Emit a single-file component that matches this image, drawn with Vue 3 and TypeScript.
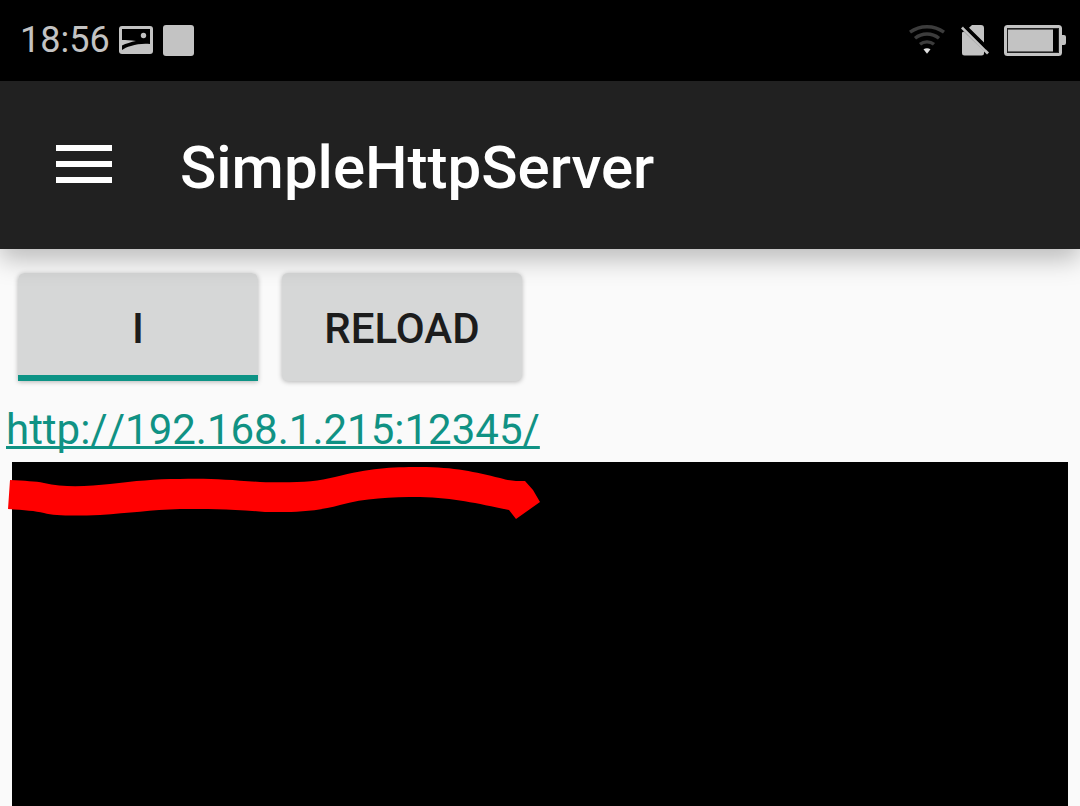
<script setup lang="ts">
import { ref } from 'vue'

const running = ref<boolean>(true)
const address = ref<string>('http://192.168.1.215:12345/')

function toggle(): void {
  running.value = !running.value
}
</script>

<template>
  <div class="screen">
    <div class="status">
      <div class="group">
        <span class="time">18:56</span>
        <svg class="picture" width="34" height="29" viewBox="0 0 34 29" aria-hidden="true">
          <rect width="34" height="28" rx="3" fill="#c3c3c3" />
          <path d="M3 3H31V18C25 17.300 18 18 12 20C8 21 5 22.500 3 24V19.500C7 17.500 12 16 17 15C12 14.300 7 14 3 14Z" fill="#000" />
          <circle cx="24.500" cy="9.500" r="2.700" fill="#c3c3c3" />
        </svg>
        <span class="square"></span>
      </div>
      <div class="group">
        <svg class="wifi" width="36" height="31" viewBox="0 0 36 31" aria-hidden="true">
          <g fill="none" stroke="#3c3c3c" stroke-width="3.400">
            <path d="M1 7.200C11 -.100 25 -.100 35 7.200" />
            <path d="M6 13.200C13 7.500 23 7.500 30 13.200" />
            <path d="M11 19.300C15 16 21 16 25 19.300" />
          </g>
          <path d="M14.500 24.300Q18 22.300 21.500 24.300L18 28.800Z" fill="#e0e0e0" />
        </svg>
        <svg class="sim" width="28" height="31" viewBox="0 0 28 31" aria-hidden="true">
          <path d="M11 0H20Q23 0 23 3V17.500L8 2.800Z" fill="#c3c3c3" />
          <path d="M1 7.500L3 6.500L23 26V28Q23 30.500 20.500 30.500H3.500Q1 30.500 1 28Z" fill="#c3c3c3" />
          <path d="M1 2.500L27 28.500" fill="none" stroke="#c3c3c3" stroke-width="2.800" />
          <path d="M3.500 1L26 23.500" fill="none" stroke="#000" stroke-width="3" />
        </svg>
        <svg class="battery" width="62" height="31" viewBox="0 0 62 31" aria-hidden="true">
          <rect x="1.500" y="1.500" width="55" height="28" rx="2" fill="none" stroke="#c3c3c3" stroke-width="3" />
          <rect x="4" y="4.500" width="45" height="22" fill="#c3c3c3" />
          <path d="M3.500 3.500H54.500V27.500H3.500Z" fill="none" stroke="#222" stroke-width="1" />
          <path d="M58 10H60Q62 10 62 12V18Q62 20 60 20H58Z" fill="#c3c3c3" />
        </svg>
      </div>
    </div>

    <header class="toolbar">
      <button class="menu" type="button" aria-label="Menu">
        <span></span><span></span><span></span>
      </button>
      <h1>SimpleHttpServer</h1>
    </header>

    <main class="content">
      <div class="actions">
        <button class="btn" :class="{ on: running }" type="button" :aria-pressed="running" @click="toggle">
          {{ running ? 'I' : 'O' }}
        </button>
        <button class="btn" type="button">RELOAD</button>
      </div>
      <a class="address" :href="address">{{ address }}</a>
      <section class="log" aria-label="Log">
        <svg class="marker" width="534" height="54" viewBox="8 466 534 54" aria-hidden="true">
          <path
            d="M10 480C25 481 35 481 44 483C65 488 90 486 110 484C135 481 155 479 180 479C210 478 230 480 260 482C295 483 315 482 335 477C370 468 390 467 420 467C455 467 475 472 500 478C510 481 515 481 525 481L533 490L540 502L516 519L509 510C475 503 455 498 420 497C390 497 365 498 340 505C310 513 290 512 265 512C230 509 210 509 180 509C150 510 130 513 100 515C75 516 55 516 44 513C35 511 25 510 8 509Z"
            fill="#f00"
          />
        </svg>
      </section>
    </main>
  </div>
</template>

<style>
body {
  margin: 0;
}
</style>

<style scoped>
.screen {
  display: flex;
  flex-direction: column;
  min-height: 100vh;
  background: #fafafa;
  color: #1c1c1c;
  font-family: Roboto, "Liberation Sans", sans-serif;
}

.status {
  display: flex;
  align-items: center;
  justify-content: space-between;
  box-sizing: border-box;
  height: 81px;
  padding: 0 14px 0 20px;
  background: #000;
}

.group {
  display: flex;
  align-items: center;
}

.time {
  margin-right: 9px;
  padding-bottom: 2px;
  color: #c3c3c3;
  font-size: 36px;
  line-height: 42px;
}

.picture {
  margin-right: 10px;
}

.square {
  width: 31px;
  height: 31px;
  border-radius: 3px;
  background: #c3c3c3;
}

.wifi {
  margin-right: 16px;
}

.sim {
  margin-right: 15px;
}

.toolbar {
  position: relative;
  display: flex;
  align-items: center;
  height: 168px;
  padding: 0 56px;
  background: #212121;
  box-shadow: 0 10px 24px rgba(0, 0, 0, 0.26);
}

.menu {
  display: flex;
  flex-direction: column;
  gap: 10px;
  width: 56px;
  margin: 0 68px 0 0;
  padding: 0 0 2px;
  border: 0;
  background: none;
}

.menu span {
  height: 6px;
  background: #fff;
}

h1 {
  margin: 0;
  padding-top: 6px;
  color: #fff;
  font-size: 60px;
  font-weight: 500;
  line-height: 70px;
}

.content {
  display: flex;
  flex: 1;
  flex-direction: column;
}

.actions {
  display: flex;
  gap: 24px;
  padding: 24px 18px;
}

.btn {
  width: 240px;
  height: 108px;
  padding: 4px 0 0;
  border: 0;
  border-radius: 6px;
  background: #d6d7d7;
  box-shadow: 0 1px 5px rgba(0, 0, 0, 0.28);
  color: #1c1c1c;
  font-family: inherit;
  font-size: 42px;
  font-weight: 500;
  line-height: 50px;
}

.btn.on {
  border-radius: 6px 6px 0 0;
  background: linear-gradient(to top, #0d9385 6px, #d6d7d7 6px);
}

.address {
  align-self: flex-start;
  margin-left: 6px;
  color: #109284;
  font-size: 42px;
  font-kerning: none;
  line-height: 50px;
  text-decoration-skip-ink: none;
  text-decoration-thickness: 3px;
}

.log {
  position: relative;
  flex: 1;
  margin: 7px 12px 0;
  background: #000;
}

.marker {
  position: absolute;
  top: 4px;
  left: -4px;
}
</style>
